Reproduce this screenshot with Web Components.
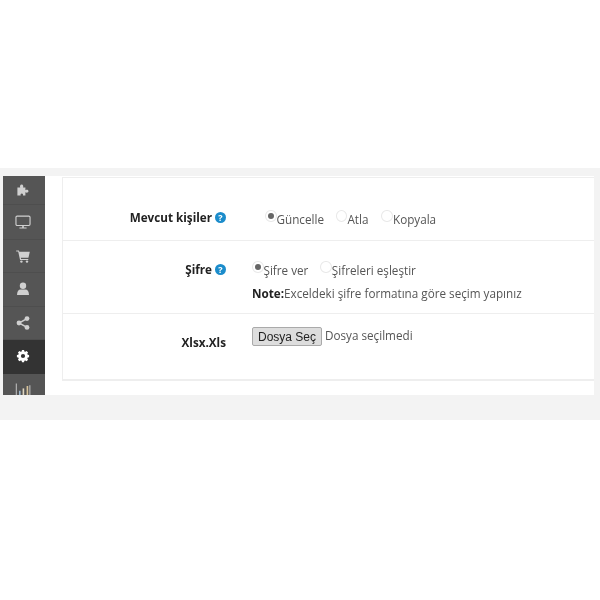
<!DOCTYPE html>
<html lang="tr">
<head>
<meta charset="utf-8">
<title>Kişi içe aktar</title>
<style>
  html, body { margin: 0; background: #fff; }
  body { padding-top: 168px; font-family: "Open Sans", sans-serif; font-size: 11.7px; color: #555; }
</style>
</head>
<body>
<import-page>
  <side-menu slot="menu"></side-menu>
  <form-panel>
    <form-row label="Mevcut kişiler" help indent="13" height="63" pad="33" label-pad="-2">
      <radio-group>
        <radio-option checked gap="12">Güncelle</radio-option>
        <radio-option gap="13">Atla</radio-option>
        <radio-option>Kopyala</radio-option>
      </radio-group>
    </form-row>
    <form-row label="Şifre" help height="73" pad="21" label-pad="-1">
      <radio-group>
        <radio-option checked gap="12">Şifre ver</radio-option>
        <radio-option>Şifreleri eşleştir</radio-option>
      </radio-group>
      <div style="margin-top:6px;line-height:17px;white-space:nowrap"><b style="color:#222">Note:</b>Exceldeki şifre formatına göre seçim yapınız</div>
    </form-row>
    <form-row label="Xlsx.Xls" height="66" pad="13" label-pad="7" last>
      <file-picker></file-picker>
    </form-row>
  </form-panel>
</import-page>

<script>
/**
 * Gray page band with the sidebar on the left and the white content area
 * @tag <import-page></import-page>
 */
class ImportPage extends HTMLElement {
  connectedCallback() {
    this.attachShadow({ mode: 'open' });
    this.shadowRoot.innerHTML = `
      <style>
        :host { display: block; background: #f3f3f3; height: 252px; padding: 8px 6px 25px 3px; box-sizing: border-box; filter: blur(.3px); }
        .wrap { display: flex; height: 219px; background: #fff; overflow: hidden; }
        .main { flex: 1; padding: 1px 0 0 17px; min-width: 0; }
      </style>
      <div class="wrap">
        <slot name="menu"></slot>
        <div class="main"><slot></slot></div>
      </div>
    `;
  }
}

/**
 * Dark icon column, the list is cut by the bottom of the wrapper
 * @tag <side-menu></side-menu>
 */
class SideMenu extends HTMLElement {
  get icons() {
    return [
      // puzzle
      '<path fill="#d0d0d0" d="M3 7h3.600C5.800 5.500 6.300 3 8.300 3s2.500 2.500 1.700 4h3v3.200c1.500-.9 3.800-.6 3.800 1.300s-2.300 2.200-3.800 1.300V17H9.800c.7-1.200.2-2.700-1.300-2.700S6.500 15.800 7.200 17H3z"/>',
      // monitor
      '<rect fill="none" stroke="#d0d0d0" stroke-width="1.400" x="1.200" y="2.700" width="17.600" height="11.600" rx="1.500"/><path fill="#d0d0d0" d="M9 14.500h2V17H9zM5.500 17h9v1.200h-9z"/>',
      // cart
      '<path fill="#d0d0d0" d="M1.500 3h3.300l.6 1.800h13.100l-1.700 7.500H7.300l.3 1.300h9v1.400H6.300L4 4.400H1.500z"/><circle fill="#d0d0d0" cx="8" cy="17" r="1.500"/><circle fill="#d0d0d0" cx="15" cy="17" r="1.500"/>',
      // user
      '<circle fill="#d0d0d0" cx="10" cy="6" r="4"/><path fill="#d0d0d0" d="M2.500 17.500c0-4.500 1.700-7 4.500-7h6c2.800 0 4.500 2.500 4.500 7z"/>',
      // share
      '<circle fill="#d0d0d0" cx="15" cy="4.500" r="3"/><circle fill="#d0d0d0" cx="15" cy="15.500" r="3"/><circle fill="#d0d0d0" cx="5" cy="10" r="3"/><path fill="none" stroke="#d0d0d0" stroke-width="1.800" d="M15 4.500L5 10l10 5.500"/>',
      // gear
      '<path fill="#fff" fill-rule="evenodd" d="M8.500 1.500h3l.4 2 1.500.6 1.700-1.100 2.100 2.100-1.100 1.700.6 1.500 2 .4v3l-2 .4-.6 1.500 1.100 1.700-2.100 2.100-1.700-1.100-1.500.6-.4 2h-3l-.4-2-1.500-.6-1.700 1.100-2.100-2.100 1.100-1.700-.6-1.500-2-.4v-3l2-.4.6-1.500-1.100-1.700 2.100-2.100 1.700 1.100 1.500-.6zM10 7a3 3 0 1 0 0 6 3 3 0 0 0 0-6z"/>',
      // bar chart
      '<path fill="#c9c9c9" d="M1 2h1.200v16H1zM18 4h1.200v14H18z"/><path fill="#d9c49a" d="M14.500 5H16.500v13h-2z"/><path fill="#9db8cf" d="M5 11h2v7H5z"/><path fill="#e0d6c0" d="M9.500 8h2v10h-2z"/>'
    ];
  }

  connectedCallback() {
    this.attachShadow({ mode: 'open' });
    const items = this.icons.map((icon, i) => `
      <div class="item ${i === 5 ? 'active' : ''} ${i === 0 ? 'first' : ''}">
        <svg width="${i === 5 ? 14 : 16}" height="${i === 5 ? 14 : 16}" viewBox="0 0 20 20">${icon}</svg>
      </div>`).join('');
    this.shadowRoot.innerHTML = `
      <style>
        :host { display: block; width: 42px; flex: none; height: 219px; overflow: hidden; background: #555; }
        .item { height: 33.500px; padding-right: 3px; display: flex; align-items: center; justify-content: center; box-sizing: border-box; border-bottom: 1px solid #4e4e4e; }
        .first { height: 29px; padding-top: 0; margin-bottom: 1px; }
        .active { background: #333; border-bottom-color: #333; }
      </style>
      ${items}
    `;
  }
}

/**
 * White bordered box that holds the rows
 * @tag <form-panel></form-panel>
 */
class FormPanel extends HTMLElement {
  connectedCallback() {
    this.attachShadow({ mode: 'open' });
    this.shadowRoot.innerHTML = `
      <style>
        :host { display: block; background: #fff; border: 1px solid #eee; border-width: 1px 0 2px 1px; box-sizing: border-box; height: 204px; }
      </style>
      <slot></slot>
    `;
  }
}

/**
 * One line of the form, right aligned label and its control
 * @tag <form-row label="" help></form-row>
 */
class FormRow extends HTMLElement {
  connectedCallback() {
    const height = this.getAttribute('height');
    const pad = this.getAttribute('pad');
    const indent = this.getAttribute('indent') || 0;
    const labelPad = this.getAttribute('label-pad') || 0;
    const help = this.hasAttribute('help') ? '<span class="help">?</span>' : '';
    this.attachShadow({ mode: 'open' });
    this.shadowRoot.innerHTML = `
      <style>
        :host { display: flex; box-sizing: border-box; height: ${height}px; padding-top: ${pad}px; border-bottom: ${this.hasAttribute('last') ? 0 : '1px solid #eee'}; }
        .label { width: 163px; flex: none; display: flex; justify-content: flex-end; align-items: center; gap: 3px; height: 16px; margin-top: ${labelPad}px;
          font-weight: 700; color: #222; white-space: nowrap; }
        .help { width: 11px; height: 11px; border-radius: 50%; background: #1b8ccb; color: #fff; font-size: 9px; line-height: 11px; text-align: center; }
        .control { margin-left: 26px; padding-left: ${indent}px; }
      </style>
      <div class="label">${this.getAttribute('label')}${help}</div>
      <div class="control"><slot></slot></div>
    `;
  }
}

/**
 * Row of radio options
 * @tag <radio-group></radio-group>
 */
class RadioGroup extends HTMLElement {
  connectedCallback() {
    this.attachShadow({ mode: 'open' });
    this.shadowRoot.innerHTML = `
      <style>:host { display: flex; white-space: nowrap; }</style>
      <slot></slot>
    `;
  }
}

/**
 * Faint round radio with its text
 * @tag <radio-option checked gap="13"></radio-option>
 */
class RadioOption extends HTMLElement {
  connectedCallback() {
    this.attachShadow({ mode: 'open' });
    this.shadowRoot.innerHTML = `
      <style>
        :host { display: flex; margin-right: ${this.getAttribute('gap') || 0}px; line-height: 17px; }
        .dot { width: 11.500px; height: 12px; margin-top: -1px; border: 1px solid #e8e8e8; border-radius: 50%; box-sizing: border-box; background: #fff;
          display: flex; align-items: center; justify-content: center; flex: none; }
        .dot i { width: 6px; height: 6px; border-radius: 50%; background: #666; }
      </style>
      <span class="dot">${this.hasAttribute('checked') ? '<i></i>' : ''}</span>
      <span><slot></slot></span>
    `;
  }
}

/**
 * Look of the native file input
 * @tag <file-picker></file-picker>
 */
class FilePicker extends HTMLElement {
  connectedCallback() {
    this.attachShadow({ mode: 'open' });
    this.shadowRoot.innerHTML = `
      <style>
        :host { display: flex; align-items: flex-start; gap: 3px; white-space: nowrap; line-height: 17px; }
        button { width: 70px; height: 19px; padding: 0; font: 12px "Liberation Sans", sans-serif; color: #222; background: #ddd;
          border: 1px solid #aaa; border-radius: 2px; }
      </style>
      <button type="button">Dosya Seç</button>
      <span>Dosya seçilmedi</span>
    `;
  }
}

customElements.define('import-page', ImportPage);
customElements.define('side-menu', SideMenu);
customElements.define('form-panel', FormPanel);
customElements.define('form-row', FormRow);
customElements.define('radio-group', RadioGroup);
customElements.define('radio-option', RadioOption);
customElements.define('file-picker', FilePicker);
</script>
</body>
</html>
